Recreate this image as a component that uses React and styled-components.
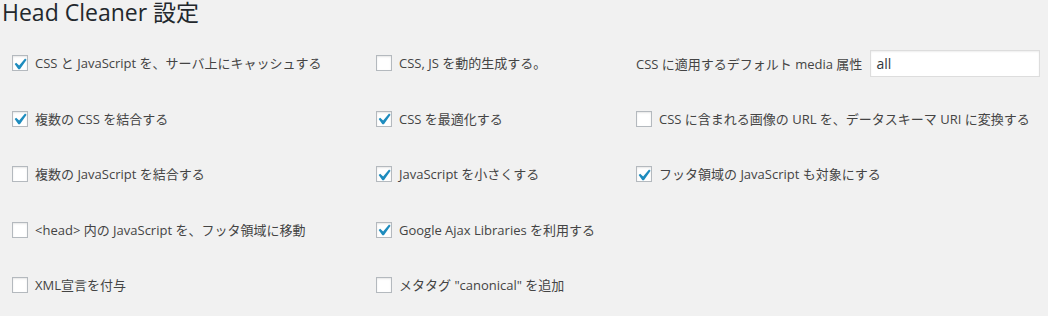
import React from 'react';
import styled, { createGlobalStyle } from 'styled-components';

const GlobalStyle = createGlobalStyle`
  html, body {
    margin: 0;
    padding: 0;
    background: #f1f1f1;
  }
  body {
    font-family: "Open Sans", "Noto Sans CJK JP", sans-serif;
    font-size: 13px;
    color: #444;
  }
`;

const Wrap = styled.div`
  width: 1048px;
  height: 316px;
  overflow: hidden;
`;

const Title = styled.h1`
  margin: -4px 0 0;
  padding: 0 0 0 2px;
  font-size: 23px;
  line-height: 33px;
  font-weight: 400;
  color: #23282d;
`;

const OptionsGrid = styled.div`
  display: grid;
  grid-template-columns: 364px 260px 1fr;
  grid-auto-rows: 55.5px;
  padding: 6.5px 0 0 12px;
`;

const Cell = styled.div`
  display: flex;
  align-items: center;
  white-space: nowrap;
`;

const Label = styled.label`
  display: flex;
  align-items: center;
  gap: 7px;
  line-height: 20px;
  cursor: pointer;
`;

const Box = styled.span`
  position: relative;
  display: inline-block;
  flex: none;
  width: 16px;
  height: 16px;
  box-sizing: border-box;
  border: 1px solid #b4b9be;
  background: #fff;
  box-shadow: inset 0 1px 2px rgba(0, 0, 0, 0.1);
`;

const Check = styled.svg`
  position: absolute;
  left: -5.5px;
  top: -3.6px;
  width: 23px;
  height: 23px;
  overflow: visible;
`;

const MediaInput = styled.input`
  width: 170px;
  height: 27px;
  box-sizing: border-box;
  margin-left: 8px;
  padding: 3px 5px;
  border: 1px solid #ddd;
  background: #fff;
  box-shadow: inset 0 1px 2px rgba(0, 0, 0, 0.07);
  font-family: "Open Sans", sans-serif;
  font-size: 14px;
  color: #32373c;
  outline: none;
`;

const Checkbox = ({ checked, children }) => (
  <Label>
    <Box>
      {checked && (
        <Check viewBox="0 0 20 20">
          <path d="M14.83 4.89l1.34.94-5.81 8.38H9.02L5.78 9.67l1.34-1.25 2.57 2.4z" fill="#1e8cbe" />
        </Check>
      )}
    </Box>
    <span>{children}</span>
  </Label>
);

const options = [
  [
    { checked: true, text: 'CSS と JavaScript を、サーバ上にキャッシュする' },
    { checked: false, text: 'CSS, JS を動的生成する。' },
    { media: true },
  ],
  [
    { checked: true, text: '複数の CSS を結合する' },
    { checked: true, text: 'CSS を最適化する' },
    { checked: false, text: 'CSS に含まれる画像の URL を、データスキーマ URI に変換する' },
  ],
  [
    { checked: false, text: '複数の JavaScript を結合する' },
    { checked: true, text: 'JavaScript を小さくする' },
    { checked: true, text: 'フッタ領域の JavaScript も対象にする' },
  ],
  [
    { checked: false, text: '<head> 内の JavaScript を、フッタ領域に移動' },
    { checked: true, text: 'Google Ajax Libraries を利用する' },
    null,
  ],
  [
    { checked: false, text: 'XML宣言を付与' },
    { checked: false, text: 'メタタグ "canonical" を追加' },
    null,
  ],
];

export default function App() {
  return (
    <Wrap>
      <GlobalStyle />
      <Title>Head Cleaner 設定</Title>
      <OptionsGrid>
        {options.flat().map((opt, i) => (
          <Cell key={i}>
            {opt && opt.media && (
              <>
                <span>CSS に適用するデフォルト media 属性</span>
                <MediaInput defaultValue="all" />
              </>
            )}
            {opt && !opt.media && <Checkbox checked={opt.checked}>{opt.text}</Checkbox>}
          </Cell>
        ))}
      </OptionsGrid>
    </Wrap>
  );
}
